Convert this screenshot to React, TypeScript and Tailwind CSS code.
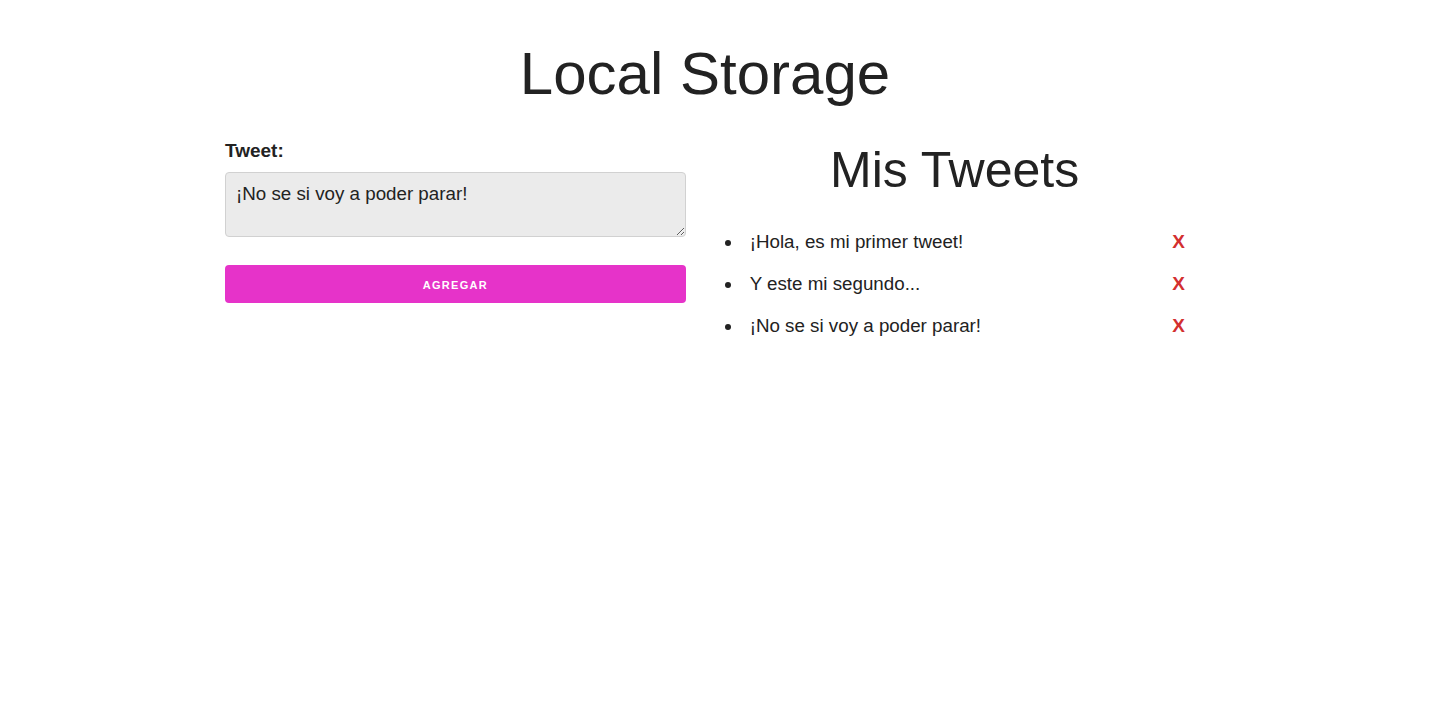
import React, { useState } from 'react';

const tweetsIniciales = [
  '¡Hola, es mi primer tweet!',
  'Y este mi segundo...',
  '¡No se si voy a poder parar!',
];

export default function App() {
  const [tweet, setTweet] = useState('¡No se si voy a poder parar!');
  const [tweets, setTweets] = useState<string[]>(tweetsIniciales);

  const agregar = () => {
    if (!tweet.trim()) return;
    setTweets(prev => [...prev, tweet]);
  };

  const borrar = (i: number) => {
    setTweets(prev => prev.filter((_, idx) => idx !== i));
  };

  return (
    <div className="min-h-screen bg-white text-[#222] font-['Liberation_Sans',Arial,sans-serif] text-[18.75px]">
      <div className="w-[960px] ml-[225px] pt-[38px]">
        <h1 className="text-[60px] leading-[72px] text-center font-normal">Local Storage</h1>

        <div className="flex gap-[38.4px] mt-[29px]">
          {/* formulario */}
          <div className="w-[460.8px]">
            <label className="block font-bold text-[19px] leading-[24px]">Tweet:</label>
            <textarea
              value={tweet}
              onChange={e => setTweet(e.target.value)}
              className="block w-full h-[65px] mt-[9px] bg-[#ebebeb] border border-[#d1d1d1] rounded-[4px] px-[10px] py-[6px] leading-[30px] text-[18.75px] text-[#222] outline-none"
            />
            <button
              onClick={agregar}
              className="block w-full h-[38px] mt-[28px] pt-[2px] bg-[#e633c9] rounded-[4px] text-white text-[11px] font-bold uppercase tracking-[1.3px]"
            >
              Agregar
            </button>
          </div>

          {/* listado */}
          <div className="w-[460.8px]">
            <h2 className="text-[50px] leading-[60px] text-center font-normal pt-[1px]">Mis Tweets</h2>
            <ul className="mt-[27px]">
              {tweets.map((t, i) => (
                <li key={i} className="flex items-center leading-[30px] mb-[12px]">
                  <span className="w-[6px] h-[6px] rounded-full bg-[#222] ml-[0.5px] mt-[1px]" />
                  <span className="ml-[19px]">{t}</span>
                  <button
                    onClick={() => borrar(i)}
                    className="ml-auto text-[#d32f2f] font-bold text-[19px]"
                  >
                    X
                  </button>
                </li>
              ))}
            </ul>
          </div>
        </div>
      </div>
    </div>
  );
}
